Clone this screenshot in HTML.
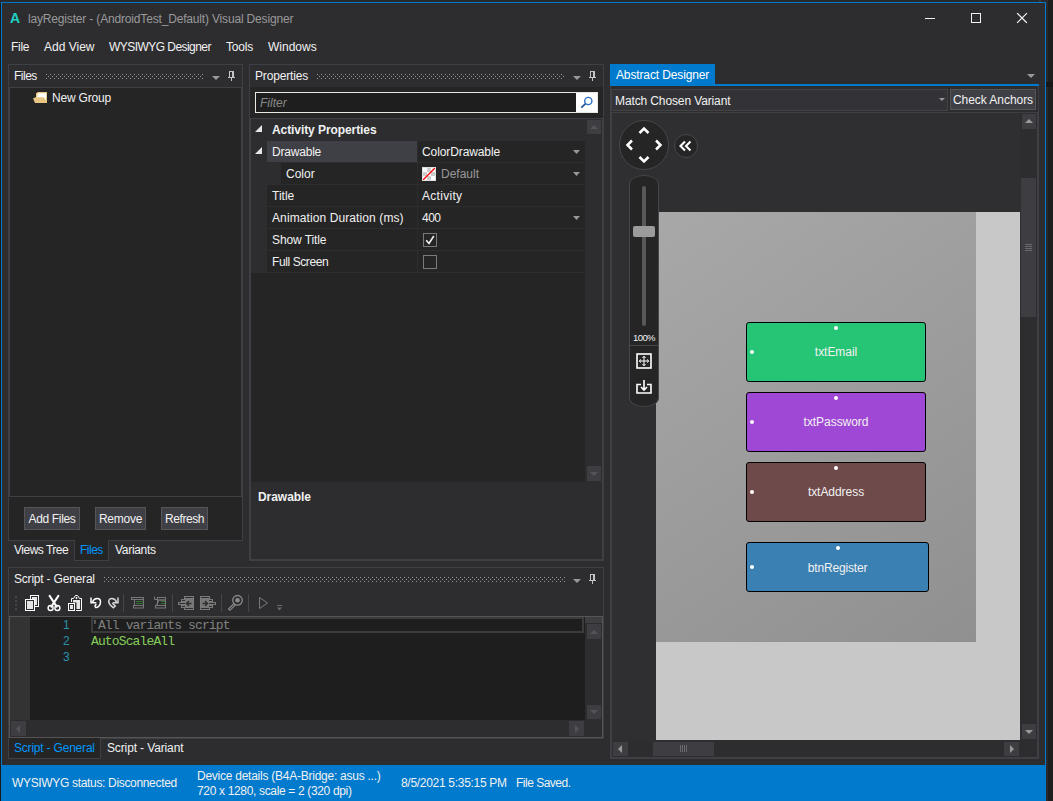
<!DOCTYPE html>
<html><head><meta charset="utf-8"><title>layRegister - Visual Designer</title>
<style>
*{box-sizing:border-box;margin:0;padding:0}
html,body{width:1053px;height:801px;overflow:hidden;background:#29292b}
body{position:relative;font-family:"Liberation Sans",sans-serif;font-size:12px;color:#f1f1f1}
.a{position:absolute}
.t{position:absolute;white-space:nowrap;line-height:14px;height:14px}
.b{font-weight:bold}
.btn{position:absolute;border:1px solid #555558;background:#3f3f46;text-align:center;white-space:nowrap}
svg{display:block;overflow:visible}
</style></head><body>
<svg width="0" height="0" style="position:absolute"><defs><pattern id="dp" width="4" height="4" patternUnits="userSpaceOnUse"><rect x="0" y="0" width="1" height="1" fill="#989898"/><rect x="2" y="2" width="1" height="1" fill="#989898"/></pattern></defs></svg>

<div class="a" style="left:1px;top:2px;width:1045px;height:800px;background:#2d2d30;border:1px solid #007acc;border-bottom:none"></div>
<div class="a" style="left:0px;top:4px;width:1px;height:797px;background:#1c1a18;"></div>
<div class="a" style="left:1046px;top:0px;width:2px;height:801px;background:#2a2a2d;"></div>
<div class="a" style="left:1048px;top:0px;width:5px;height:801px;background:#1e1e1e;"></div>
<div class="a" style="left:1046px;top:82px;width:7px;height:5px;background:#181818;"></div>
<div class="a" style="left:1039px;top:0px;width:2px;height:2px;background:#38383c;"></div>
<div class="t b" style="left:10px;top:10px;font-size:14px;line-height:16px;height:16px;color:#1fd3c3">A</div>
<div class="t " style="left:28px;top:12px;color:#999;letter-spacing:-0.17px">layRegister - (AndroidTest_Default) Visual Designer</div>
<svg class="a" style="left:920px;top:8px" width="115" height="22" viewBox="0 0 115 22" fill="none" stroke="#f1f1f1" stroke-width="1"><path d="M5 10.5H15"/><rect x="51.5" y="5.5" width="9" height="9"/><path d="M97.500 5.500L106.500 14.500M106.500 5.500L97.500 14.500" stroke-width="1.2" stroke-linecap="square"/></svg>
<div class="t " style="left:11px;top:40px;letter-spacing:-0.3px">File</div>
<div class="t " style="left:44px;top:40px;">Add View</div>
<div class="t " style="left:109px;top:40px;letter-spacing:-0.55px">WYSIWYG Designer</div>
<div class="t " style="left:226px;top:40px;letter-spacing:-0.2px">Tools</div>
<div class="t " style="left:268px;top:40px;">Windows</div>
<div class="a" style="left:8px;top:64px;width:235px;height:477px;border:1px solid #3f3f46"></div>
<div class="t " style="left:14px;top:69px;letter-spacing:-0.5px">Files</div>
<svg class="a" style="left:46px;top:74px" width="157" height="5"><rect width="157" height="5" fill="url(#dp)"/></svg>
<svg class="a" style="left:212px;top:76px" width="8" height="4"><path d="M0 0H8L4.0 4Z" fill="#999"/></svg>
<svg class="a" style="left:227px;top:71px" width="9" height="11" viewBox="0 0 9 11"><path d="M2 0H7V6H8V7H5V10H4V7H1V6H2ZM3 1V6H5V1Z" fill="#c4c4c4"/></svg>
<div class="a" style="left:9px;top:87px;width:233px;height:453px;background:#252526;"></div>
<div class="a" style="left:9px;top:87px;width:233px;height:410px;background:#252526;border:1px solid #3f3f46"></div>
<svg class="a" style="left:33px;top:92px" width="14" height="11" viewBox="0 0 14 11"><path d="M3 1.200L5 0H14V11H2L0 6.500L3 5Z" fill="#e9c583"/><path d="M5 1.200H13V8.500L10.800 5.300H4Z" fill="#fff"/></svg>
<div class="t " style="left:52px;top:91px;letter-spacing:-0.2px">New Group</div>
<div class="btn" style="left:24px;top:507px;width:56px;height:23px;line-height:23px;letter-spacing:-0.35px">Add Files</div>
<div class="btn" style="left:95px;top:507px;width:51px;height:23px;line-height:23px;letter-spacing:-0.25px">Remove</div>
<div class="btn" style="left:161px;top:507px;width:47px;height:23px;line-height:23px;letter-spacing:-0.45px">Refresh</div>
<div class="t " style="left:14px;top:543px;letter-spacing:-0.5px">Views Tree</div>
<div class="a" style="left:74px;top:540px;width:35px;height:21px;background:#252526;border:1px solid #3f3f46;border-top:none"></div>
<div class="t " style="left:80px;top:543px;color:#0097fb;letter-spacing:-0.5px">Files</div>
<div class="t " style="left:115px;top:543px;letter-spacing:-0.3px">Variants</div>
<div class="a" style="left:249px;top:64px;width:355px;height:497px;border:1px solid #3f3f46"></div>
<div class="t " style="left:255px;top:69px;letter-spacing:-0.15px">Properties</div>
<svg class="a" style="left:317px;top:74px" width="247" height="5"><rect width="247" height="5" fill="url(#dp)"/></svg>
<svg class="a" style="left:573px;top:76px" width="8" height="4"><path d="M0 0H8L4.0 4Z" fill="#999"/></svg>
<svg class="a" style="left:588px;top:71px" width="9" height="11" viewBox="0 0 9 11"><path d="M2 0H7V6H8V7H5V10H4V7H1V6H2ZM3 1V6H5V1Z" fill="#c4c4c4"/></svg>
<div class="a" style="left:250px;top:87px;width:353px;height:31px;background:#252526;"></div>
<div class="a" style="left:255px;top:92px;width:343px;height:21px;background:#1e1e1e;border:1px solid #e8e8e8"></div>
<div class="t " style="left:260px;top:96px;color:#8a8a8a;font-style:italic">Filter</div>
<div class="a" style="left:576px;top:93px;width:21px;height:19px;background:#ffffff;"></div>
<svg class="a" style="left:579px;top:95px" width="15" height="15" viewBox="0 0 15 15" fill="none"><circle cx="9.3" cy="6" r="3.6" stroke="#2a6fc4" stroke-width="1.4"/><path d="M6.6 8.7L2.3 12.6" stroke="#1c4f96" stroke-width="1.6"/></svg>
<div class="a" style="left:250px;top:118px;width:353px;height:442px;background:#2d2d30;border:1px solid #3f3f46"></div>
<div class="a" style="left:251px;top:119px;width:351px;height:363px;background:#252526;"></div>
<div class="a" style="left:251px;top:119px;width:16px;height:154px;background:#2d2d30;"></div>
<div class="a" style="left:251px;top:119px;width:334px;height:22px;background:#2d2d30;"></div>
<div class="a" style="left:585px;top:119px;width:17px;height:363px;background:#2d2d30;"></div>
<div class="t b" style="left:272px;top:123px;letter-spacing:-0.08px">Activity Properties</div>
<div class="a" style="left:267px;top:162px;width:318px;height:1px;background:#2d2d30;"></div>
<div class="a" style="left:267px;top:184px;width:318px;height:1px;background:#2d2d30;"></div>
<div class="a" style="left:267px;top:206px;width:318px;height:1px;background:#2d2d30;"></div>
<div class="a" style="left:267px;top:228px;width:318px;height:1px;background:#2d2d30;"></div>
<div class="a" style="left:267px;top:250px;width:318px;height:1px;background:#2d2d30;"></div>
<div class="a" style="left:267px;top:272px;width:318px;height:1px;background:#2d2d30;"></div>
<div class="a" style="left:417px;top:141px;width:1px;height:132px;background:#2d2d30;"></div>
<div class="a" style="left:267px;top:141px;width:150px;height:21px;background:#3f3f46;"></div>
<div class="a" style="left:267px;top:163px;width:14px;height:22px;background:#2d2d30;"></div>
<svg class="a" style="left:255px;top:125px" width="7" height="7"><path d="M7 0V7H0Z" fill="#e6e6e6"/></svg>
<svg class="a" style="left:255px;top:147px" width="7" height="7"><path d="M7 0V7H0Z" fill="#e6e6e6"/></svg>
<div class="t " style="left:272px;top:145px;letter-spacing:-0.2px">Drawable</div>
<div class="t " style="left:286px;top:167px;">Color</div>
<div class="t " style="left:272px;top:189px;">Title</div>
<div class="t " style="left:272px;top:211px;letter-spacing:0.1px">Animation Duration (ms)</div>
<div class="t " style="left:272px;top:233px;letter-spacing:-0.1px">Show Title</div>
<div class="t " style="left:272px;top:255px;letter-spacing:-0.4px">Full Screen</div>
<div class="t " style="left:422px;top:145px;letter-spacing:-0.1px">ColorDrawable</div>
<svg class="a" style="left:422px;top:167px" width="14" height="14"><rect width="14" height="14" fill="#fff"/><rect x="5" y="1" width="4" height="4" fill="#ccc"/><rect x="1" y="5" width="4" height="4" fill="#ccc"/><rect x="9" y="5" width="4" height="4" fill="#ccc"/><rect x="5" y="9" width="4" height="4" fill="#ccc"/><path d="M13 1L1 13" stroke="#f00" stroke-width="1.3"/><rect x="0.5" y="0.5" width="13" height="13" fill="none" stroke="#e0e0e0"/></svg>
<div class="t " style="left:441px;top:167px;color:#999">Default</div>
<div class="t " style="left:422px;top:189px;letter-spacing:0.3px">Activity</div>
<div class="t " style="left:422px;top:211px;letter-spacing:-0.5px">400</div>
<div class="a" style="left:423px;top:233px;width:14px;height:14px;border:1px solid #7a7a7a"></div>
<svg class="a" style="left:423px;top:233px" width="14" height="14" fill="none" stroke="#f1f1f1" stroke-width="1.6"><path d="M3.2 7.2L6 10.500L10.800 3"/></svg>
<div class="a" style="left:423px;top:255px;width:14px;height:14px;border:1px solid #7a7a7a"></div>
<svg class="a" style="left:573px;top:150px" width="7" height="4"><path d="M0 0H7L3.5 4Z" fill="#999"/></svg>
<svg class="a" style="left:573px;top:172px" width="7" height="4"><path d="M0 0H7L3.5 4Z" fill="#999"/></svg>
<svg class="a" style="left:573px;top:216px" width="7" height="4"><path d="M0 0H7L3.5 4Z" fill="#999"/></svg>
<div class="a" style="left:587px;top:120px;width:14px;height:14px;background:#3e3e42;"></div>
<svg class="a" style="left:590px;top:125px" width="8" height="4"><path d="M0 4H8L4.0 0Z" fill="#555558"/></svg>
<div class="a" style="left:587px;top:466px;width:14px;height:15px;background:#3e3e42;"></div>
<svg class="a" style="left:590px;top:472px" width="8" height="4"><path d="M0 0H8L4.0 4Z" fill="#555558"/></svg>
<div class="t b" style="left:258px;top:490px;letter-spacing:-0.05px">Drawable</div>
<div class="a" style="left:8px;top:567px;width:596px;height:172px;border:1px solid #3f3f46"></div>
<div class="t " style="left:14px;top:572px;letter-spacing:-0.2px">Script - General</div>
<svg class="a" style="left:104px;top:577px" width="462" height="5"><rect width="462" height="5" fill="url(#dp)"/></svg>
<svg class="a" style="left:573px;top:579px" width="8" height="4"><path d="M0 0H8L4.0 4Z" fill="#999"/></svg>
<svg class="a" style="left:588px;top:574px" width="9" height="11" viewBox="0 0 9 11"><path d="M2 0H7V6H8V7H5V10H4V7H1V6H2ZM3 1V6H5V1Z" fill="#c4c4c4"/></svg>
<svg class="a" style="left:10px;top:590px" width="290" height="26" viewBox="0 0 290 26" fill="none">
<g fill="#46464a"><rect x="5" y="6" width="2" height="2"/><rect x="5" y="10" width="2" height="2"/><rect x="5" y="14" width="2" height="2"/><rect x="5" y="18" width="2" height="2"/>
<rect x="113" y="4" width="1" height="18"/><rect x="162" y="4" width="1" height="18"/><rect x="211" y="4" width="1" height="18"/><rect x="238" y="4" width="1" height="18"/></g>
<!-- copy -->
<rect x="20.5" y="5.5" width="8" height="11" stroke="#fff" fill="#2d2d30"/><rect x="22" y="7" width="5" height="8" fill="#e4e4e4"/>
<rect x="15.5" y="9.5" width="9" height="11" stroke="#fff" fill="#2d2d30"/><rect x="17" y="11" width="6" height="8" fill="#e4e4e4"/>
<!-- cut -->
<path d="M39.7 6L46.6 16.5M48.3 6L41.4 16.5" stroke="#fff" stroke-width="2.2" stroke-linecap="round"/>
<circle cx="40.6" cy="18" r="2.5" stroke="#fff" stroke-width="1.4"/><circle cx="47.4" cy="18" r="2.5" stroke="#fff" stroke-width="1.4"/>
<!-- paste -->
<path d="M61.5 12V8.5H63.5L65.5 5.500H67.5L69.5 8.5H71.5V20.5H66" stroke="#fff" fill="#2d2d30"/>
<path d="M63 10H70V19H66.500V12.500H63Z" fill="#e4e4e4"/><circle cx="66.500" cy="8" r="0.900" fill="#fff"/>
<rect x="58.500" y="13.500" width="6" height="7" stroke="#fff" fill="#2d2d30"/><rect x="60" y="15" width="3" height="4" fill="#e4e4e4"/>
<!-- undo -->
<path d="M81 7.500V12.800H86.300" stroke="#fff" stroke-width="1.500"/><path d="M82.500 12C84.500 7.300 90.500 7.600 90.500 12C90.500 15.500 87.500 17.800 85.700 17.500C84.500 16.500 85 15 86.500 14.300" stroke="#fff" stroke-width="1.500"/>
<!-- redo -->
<path d="M108 7.500V12.800H102.700" stroke="#d8d8d8" stroke-width="1.500"/><path d="M106.500 12C104.500 7.300 98.700 7.600 98.700 11.500C98.700 14.500 101.500 16 103.300 17.700L105.300 16L102.300 13.300" stroke="#d8d8d8" stroke-width="1.500"/>
<!-- comment -->
<g stroke="#777"><rect x="121.500" y="7.500" width="12" height="2"/><rect x="124.500" y="9.500" width="9" height="6"/><rect x="123.500" y="15.500" width="10" height="2.500"/></g>
<path d="M126 11.500H133M126 13.500H133" stroke="#2f6f2f"/>
<!-- uncomment -->
<g stroke="#777"><rect x="147.500" y="7.500" width="8" height="2.500"/><rect x="147.500" y="10" width="8" height="5.500"/><rect x="145.500" y="15.500" width="10" height="2.500"/><path d="M144.500 6.500V9.500H147M145 9.500C148.500 8.500 150 11.500 146 14.500"/></g>
<path d="M151 11.500H155M151 13.500H155" stroke="#2f6f2f"/>
<!-- outdent -->
<g stroke="#7a7a7a"><rect x="174.500" y="6.500" width="9" height="2"/><rect x="171.500" y="9.500" width="12" height="2"/><rect x="168.500" y="12.500" width="15" height="2"/><rect x="171.500" y="15.500" width="12" height="2"/><rect x="174.500" y="17.500" width="9" height="2"/></g>
<rect x="175" y="9" width="8" height="9" fill="#777"/><path d="M181.500 13.500H177M179 11L176.500 13.500L179 16" stroke="#2d2d30" stroke-width="1.400"/>
<!-- indent -->
<g stroke="#7a7a7a"><rect x="190.500" y="6.500" width="9" height="2"/><rect x="190.500" y="9.500" width="12" height="2"/><rect x="190.500" y="12.500" width="15" height="2"/><rect x="190.500" y="15.500" width="12" height="2"/><rect x="190.500" y="17.500" width="9" height="2"/></g>
<rect x="191" y="9" width="8" height="9" fill="#777"/><path d="M192.500 13.500H197M195 11L197.500 13.500L195 16" stroke="#2d2d30" stroke-width="1.400"/>
<!-- find -->
<circle cx="227.500" cy="10.300" r="4.800" stroke="#8a8a8a" stroke-width="1.300"/><circle cx="227.500" cy="10.300" r="2.300" fill="#8a8a8a"/><path d="M224 13.500L218.500 19L220 20.300L225.300 15" stroke="#8a8a8a" stroke-width="1.100"/>
<!-- play -->
<path d="M249.500 7.500V18.500L257.500 13Z" stroke="#7a7a7a"/>
<!-- overflow -->
<path d="M267 15.500H272" stroke="#6a6a6a"/><path d="M267 17.500H272L269.500 20.500Z" fill="#6a6a6a"/>
</svg>

<div class="a" style="left:9px;top:616px;width:594px;height:122px;background:#333333;border:1px solid #555"></div>
<div class="a" style="left:30px;top:617px;width:555px;height:103px;background:#1e1e1e;"></div>
<div class="a" style="left:91px;top:617px;width:493px;height:16px;border:2px solid #3b3b3b"></div>
<div class="a" style="left:585px;top:617px;width:17px;height:103px;background:#2d2d30;"></div>
<div class="a" style="left:10px;top:720px;width:592px;height:17px;background:#2d2d30;"></div>
<div class="a" style="left:585px;top:617px;width:17px;height:6px;background:#3e3e42;"></div>
<div class="a" style="left:587px;top:624px;width:14px;height:15px;background:#3e3e42;"></div>
<svg class="a" style="left:590px;top:630px" width="8" height="4"><path d="M0 4H8L4.0 0Z" fill="#555558"/></svg>
<div class="a" style="left:587px;top:705px;width:14px;height:14px;background:#3e3e42;"></div>
<svg class="a" style="left:590px;top:710px" width="8" height="4"><path d="M0 0H8L4.0 4Z" fill="#555558"/></svg>
<div class="a" style="left:11px;top:721px;width:15px;height:15px;background:#3e3e42;"></div>
<svg class="a" style="left:16px;top:725px" width="4" height="8"><path d="M4 0V8L0 4.0Z" fill="#555558"/></svg>
<div class="a" style="left:569px;top:721px;width:15px;height:15px;background:#3e3e42;"></div>
<svg class="a" style="left:575px;top:725px" width="4" height="8"><path d="M0 0V8L4 4.0Z" fill="#555558"/></svg>
<div class="t " style="left:63px;top:618px;color:#2b91af;font-size:12px;letter-spacing:-0.5px">1</div>
<div class="t " style="left:63px;top:634px;color:#2b91af;font-size:12px;letter-spacing:-0.5px">2</div>
<div class="t " style="left:63px;top:650px;color:#2b91af;font-size:12px;letter-spacing:-0.5px">3</div>
<div class="t " style="left:91px;top:619px;font-family:'Liberation Mono',monospace;font-size:13px;letter-spacing:-0.87px;color:#808080">'All variants script</div>
<div class="t " style="left:91px;top:635px;font-family:'Liberation Mono',monospace;font-size:13px;letter-spacing:-0.87px;color:#86cf5a">AutoScaleAll</div>
<div class="a" style="left:8px;top:738px;width:93px;height:21px;background:#252526;border:1px solid #3f3f46;border-top:none"></div>
<div class="t " style="left:14px;top:741px;color:#0097fb;letter-spacing:-0.2px">Script - General</div>
<div class="t " style="left:107px;top:741px;letter-spacing:-0.13px">Script - Variant</div>
<div class="a" style="left:2px;top:765px;width:1043px;height:36px;background:#007acc;"></div>
<div class="t " style="left:12px;top:776px;letter-spacing:-0.33px">WYSIWYG status: Disconnected</div>
<div class="t " style="left:197px;top:769px;letter-spacing:-0.25px">Device details (B4A-Bridge: asus ...)</div>
<div class="t " style="left:197px;top:784px;letter-spacing:-0.34px">720 x 1280, scale = 2 (320 dpi)</div>
<div class="t " style="left:401px;top:776px;letter-spacing:-0.3px">8/5/2021 5:35:15 PM</div>
<div class="t " style="left:516px;top:776px;letter-spacing:-0.5px">File Saved.</div>
<div class="a" style="left:610px;top:64px;width:105px;height:22px;background:#007acc;"></div>
<div class="a" style="left:610px;top:84px;width:429px;height:2px;background:#007acc;"></div>
<div class="t " style="left:616px;top:68px;color:#fff;letter-spacing:-0.13px">Abstract Designer</div>
<svg class="a" style="left:1027px;top:74px" width="8" height="4"><path d="M0 0H8L4.0 4Z" fill="#999"/></svg>
<div class="a" style="left:610px;top:86px;width:1px;height:673px;background:#3f3f46;"></div>
<div class="a" style="left:1038px;top:86px;width:1px;height:673px;background:#3f3f46;"></div>
<div class="a" style="left:610px;top:758px;width:429px;height:1px;background:#3f3f46;"></div>
<div class="a" style="left:611px;top:89px;width:337px;height:22px;background:#333337;border:1px solid #434346"></div>
<div class="t " style="left:615px;top:94px;letter-spacing:-0.12px">Match Chosen Variant</div>
<svg class="a" style="left:939px;top:98px" width="6" height="3"><path d="M0 0H6L3.0 3Z" fill="#999"/></svg>
<div class="btn" style="left:950px;top:89px;width:86px;height:21px;line-height:20px;letter-spacing:-0.05px">Check Anchors</div>
<div class="a" style="left:611px;top:112px;width:427px;height:646px;background:#2f2f31;border:1px solid #3f3f46"></div>
<div class="a" style="left:656px;top:212px;width:364px;height:528px;background:#c8c8c8;"></div>
<div class="a" style="left:656px;top:212px;width:320px;height:430px;background:linear-gradient(146deg,#a8a8a8,#909090)"></div>
<div class="a" style="left:746px;top:322px;width:180px;height:60px;background:#26c475;border:1px solid #000;border-radius:3px"></div>
<div class="t" style="left:746px;top:345px;width:180px;text-align:center;letter-spacing:-0.05px">txtEmail</div>
<div class="a" style="left:834px;top:326px;width:4px;height:4px;background:#fff;border-radius:50%"></div>
<div class="a" style="left:750px;top:350px;width:4px;height:4px;background:#fff;border-radius:50%"></div>
<div class="a" style="left:746px;top:392px;width:180px;height:60px;background:#a048d6;border:1px solid #000;border-radius:3px"></div>
<div class="t" style="left:746px;top:415px;width:180px;text-align:center;letter-spacing:-0.05px">txtPassword</div>
<div class="a" style="left:834px;top:396px;width:4px;height:4px;background:#fff;border-radius:50%"></div>
<div class="a" style="left:750px;top:420px;width:4px;height:4px;background:#fff;border-radius:50%"></div>
<div class="a" style="left:746px;top:462px;width:180px;height:60px;background:#6f4a4b;border:1px solid #000;border-radius:3px"></div>
<div class="t" style="left:746px;top:485px;width:180px;text-align:center;letter-spacing:-0.05px">txtAddress</div>
<div class="a" style="left:834px;top:466px;width:4px;height:4px;background:#fff;border-radius:50%"></div>
<div class="a" style="left:750px;top:490px;width:4px;height:4px;background:#fff;border-radius:50%"></div>
<div class="a" style="left:746px;top:542px;width:183px;height:50px;background:#3a80b2;border:1px solid #000;border-radius:3px"></div>
<div class="t" style="left:746px;top:561px;width:183px;text-align:center;letter-spacing:-0.17px">btnRegister</div>
<div class="a" style="left:836px;top:546px;width:4px;height:4px;background:#fff;border-radius:50%"></div>
<div class="a" style="left:750px;top:565px;width:4px;height:4px;background:#fff;border-radius:50%"></div>
<div class="a" style="left:619px;top:120px;width:50px;height:50px;background:#252526;border:1px solid #46464c;border-radius:50%"></div>
<svg class="a" style="left:619px;top:120px" width="50" height="50" fill="none" stroke="#fff" stroke-width="2.5"><path d="M20.5 13L25 8.5L29.5 13"/><path d="M20.5 37L25 41.5L29.5 37"/><path d="M13 20.5L8.5 25L13 29.5"/><path d="M37 20.5L41.5 25L37 29.5"/></svg>
<div class="a" style="left:674px;top:134px;width:24px;height:24px;background:#252526;border:1px solid #46464c;border-radius:50%"></div>
<svg class="a" style="left:674px;top:134px" width="24" height="24" fill="none" stroke="#fff" stroke-width="2.1"><path d="M11 7.5L6.5 12L11 16.5"/><path d="M16.5 7.5L12 12L16.5 16.5"/></svg>
<div class="a" style="left:629px;top:175px;width:30px;height:232px;background:#252526;border:1px solid #46464c;border-radius:15px / 9px"></div>
<div class="a" style="left:642px;top:186px;width:4px;height:140px;background:#585858;border-radius:2px"></div>
<div class="a" style="left:633px;top:226px;width:22px;height:11px;background:#9b9b9b;border-radius:2px"></div>
<div class="t" style="left:629px;top:331px;width:30px;text-align:center;font-size:9.5px;letter-spacing:-0.6px">100%</div>
<div class="a" style="left:630px;top:345px;width:28px;height:1px;background:#46464c;"></div>
<svg class="a" style="left:636px;top:353px" width="16" height="16" fill="none" stroke="#fff"><rect x="1" y="1" width="14" height="14" stroke-width="1.6"/><path d="M8 3.5V12.5M3.5 8H12.5" stroke-width="1"/><path d="M6.5 5L8 3.2L9.5 5M6.5 11L8 12.8L9.5 11M5 6.5L3.2 8L5 9.5M11 6.5L12.8 8L11 9.5" stroke-width="1"/></svg>
<svg class="a" style="left:636px;top:379px" width="16" height="16" fill="none" stroke="#fff" stroke-width="1.6"><path d="M5 5.5H1V14H15V5.5H11"/><path d="M8 1V10.5M5 8L8 11L11 8"/></svg>
<div class="a" style="left:1020px;top:113px;width:17px;height:628px;background:#2d2d30;"></div>
<div class="a" style="left:1022px;top:114px;width:14px;height:15px;background:#3e3e42;"></div>
<svg class="a" style="left:1025px;top:119px" width="8" height="4"><path d="M0 4H8L4.0 0Z" fill="#999"/></svg>
<div class="a" style="left:1021px;top:178px;width:15px;height:139px;background:#3e3e42;"></div>
<div class="a" style="left:1025px;top:244px;width:7px;height:1px;background:#6a6a6e;"></div>
<div class="a" style="left:1025px;top:246px;width:7px;height:1px;background:#6a6a6e;"></div>
<div class="a" style="left:1025px;top:248px;width:7px;height:1px;background:#6a6a6e;"></div>
<div class="a" style="left:1025px;top:250px;width:7px;height:1px;background:#6a6a6e;"></div>
<div class="a" style="left:1022px;top:724px;width:14px;height:15px;background:#3e3e42;"></div>
<svg class="a" style="left:1025px;top:730px" width="8" height="4"><path d="M0 0H8L4.0 4Z" fill="#999"/></svg>
<div class="a" style="left:612px;top:741px;width:425px;height:16px;background:#2d2d30;"></div>
<div class="a" style="left:613px;top:742px;width:15px;height:14px;background:#3e3e42;"></div>
<svg class="a" style="left:618px;top:745px" width="4" height="8"><path d="M4 0V8L0 4.0Z" fill="#999"/></svg>
<div class="a" style="left:653px;top:742px;width:61px;height:14px;background:#3e3e42;"></div>
<div class="a" style="left:680px;top:745px;width:1px;height:7px;background:#6a6a6e;"></div>
<div class="a" style="left:682px;top:745px;width:1px;height:7px;background:#6a6a6e;"></div>
<div class="a" style="left:684px;top:745px;width:1px;height:7px;background:#6a6a6e;"></div>
<div class="a" style="left:686px;top:745px;width:1px;height:7px;background:#6a6a6e;"></div>
<div class="a" style="left:1004px;top:742px;width:15px;height:14px;background:#3e3e42;"></div>
<svg class="a" style="left:1010px;top:745px" width="4" height="8"><path d="M0 0V8L4 4.0Z" fill="#999"/></svg>
</body></html>
